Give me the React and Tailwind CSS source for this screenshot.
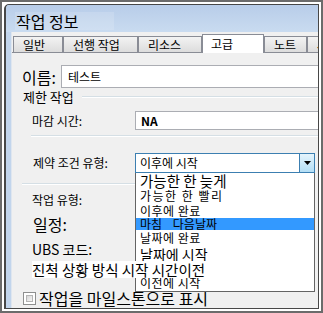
import React from "react";

const tabs = [
  { label: "일반", w: "w-[50px]" },
  { label: "선행 작업", w: "w-[75px]" },
  { label: "리소스", w: "w-[64px]" },
  { label: "고급", w: "w-[62px]", active: true },
  { label: "노트", w: "w-[43px]" },
  { label: "사용자 지정", w: "w-[30px]" },
];

const options = [
  { label: "가능한 한 늦게", h: "h-[15px]", size: "text-[14.5px]" },
  { label: "가능한 한 빨리", h: "h-[14px]", size: "text-[12px] tracking-[1.5px]" },
  { label: "이후에 완료", h: "h-[15px]", size: "text-[12px] tracking-[0.5px]" },
  { label: "마침    다음날짜", h: "h-[12px]", size: "text-[12px]", selected: true },
  { label: "날짜에 완료", h: "h-[16px]", size: "text-[12px] tracking-[0.5px]" },
  { label: "날짜에 시작", h: "h-[16px]", size: "text-[14px]" },
  { label: "", h: "h-[14px]", size: "text-[12px]" },
  { label: "이전에 시작", h: "h-[13px]", size: "text-[12px] tracking-[0.5px]" },
];

const Tab = ({ label, w, active }) => (
  <div
    className={
      active
        ? `${w} h-[19px] -mb-px bg-white border border-b-0 border-[#898c95] pl-[8px] text-[12px] leading-[17px] z-10 whitespace-nowrap overflow-hidden`
        : `${w} h-[16px] bg-gradient-to-b from-[#f3f3f3] to-[#dcdcdc] border border-b-0 border-[#898c95] pl-[9px] text-[12px] leading-[15px] whitespace-nowrap overflow-hidden`
    }
  >
    {label}
  </div>
);

export default function App() {
  return (
    <div className="w-[323px] h-[313px] bg-white border-2 border-[#6b6b6b] p-[2px] overflow-hidden text-black font-['Noto_Sans_CJK_KR','Noto_Sans',sans-serif]">
      <div className="h-full flex flex-col border border-l-2 border-[#474747] rounded-tl-[5px] bg-[#c2d5ec] overflow-hidden">
        {/* title bar */}
        <div className="h-[27px] shrink-0 flex items-center pt-[5px] pl-[9px] bg-gradient-to-b from-[#b8cde9] to-[#c9dbf0]">
          <span className="text-[16px] leading-[18px] px-[1px] pr-[36px] bg-white/15">작업 정보</span>
        </div>

        <div className="flex-1 flex pl-[5px]">
          <div className="flex-1 flex flex-col bg-[#f0f0f0] border-l border-[#dfe6ef]">
            {/* tabs */}
            <div className="h-[19px] shrink-0 flex items-end pl-[1px] mt-px">
              {tabs.map((t) => (
                <Tab key={t.label} {...t} />
              ))}
            </div>

            {/* pane */}
            <div className="relative flex-1 flex flex-col border-t border-[#898c95] pl-[10px]">
              {/* name */}
              <div className="mt-[12px] h-[23px] flex items-center">
                <span className="w-[39px] text-[16px] leading-[18px]">이름:</span>
                <div className="flex-1 h-[23px] bg-white border border-r-0 border-[#abadb3] pl-[6px] text-[12px] leading-[21px]">
                  테스트
                </div>
              </div>

              {/* group */}
              <div className="mt-px h-[16px] flex items-center">
                <span className="pl-px pr-[8px] text-[13px] leading-[16px]">제한 작업</span>
                <div className="flex-1 border-t border-[#d5dfe5] border-b border-b-white" />
              </div>

              {/* deadline */}
              <div className="mt-[6px] h-[19px] flex items-center pl-[10px]">
                <span className="w-[103px] text-[12px] leading-[14px]">마감 시간:</span>
                <div className="flex-1 h-[19px] bg-white border border-r-0 border-[#abadb3] pl-[5px] text-[12px] font-semibold leading-[17px]">
                  NA
                </div>
              </div>

              <div className="mt-[5px] ml-[9px] border-t border-[#d5dfe5] border-b border-b-white" />

              {/* constraint */}
              <div className="mt-[16px] h-[20px] flex items-center pl-[11px]">
                <span className="w-[102px] text-[12px] leading-[14px]">제약 조건 유형:</span>
                <div className="w-[180px] h-[20px] flex bg-white border border-[#3c7fb1]">
                  <span className="flex-1 pl-[4px] text-[12px] leading-[18px]">이후에 시작</span>
                  <div className="w-[15px] h-full flex items-center justify-center border-l border-[#3c7fb1] bg-gradient-to-b from-[#e5f4fc] to-[#b3def5]">
                    <svg width="7" height="4" viewBox="0 0 7 4">
                      <path d="M0 0H7L3.5 4Z" fill="#000" />
                    </svg>
                  </div>
                </div>
              </div>

              <div className="mt-[10px] w-[113px] border-t border-[#d5dfe5] border-b border-b-white" />

              <div className="mt-[8px] h-[14px] flex items-center pl-[10px] text-[12px] leading-[14px]">작업 유형:</div>
              <div className="mt-[8px] h-[18px] flex items-center pl-[11px] text-[16px] leading-[18px]">일정:</div>
              <div className="mt-[8px] h-[16px] flex items-center pl-[10px] text-[14px] leading-[16px]">UBS 코드:</div>
              <div className="relative z-20 mt-[3px] h-[18px] flex items-center pl-[10px]">
                <span className="bg-white text-[14.5px] leading-[17px] pr-[2px]">진척 상황 방식 시작 시간이전</span>
              </div>

              {/* milestone checkbox */}
              <div className="mt-[12px] h-[16px] flex items-center gap-[3px] pl-px">
                <div className="w-[13px] h-[13px] border border-[#8e8f8f] bg-white p-[2px]">
                  <div className="w-full h-full bg-gradient-to-br from-[#d6d6d6] to-[#f6f6f6] border border-[#b5b5b5]" />
                </div>
                <span className="text-[16px] leading-[18px]">작업을 마일스톤으로 표시</span>
              </div>

              {/* open dropdown list */}
              <div className="absolute z-10 left-[123px] top-[120px] w-[180px] h-[119px] bg-white border border-[#646464] border-t-0 pt-px">
                {options.map((o, i) => (
                  <div
                    key={i}
                    className={`${o.h} ${o.size} flex items-center pl-[4px] whitespace-pre leading-none ${
                      o.selected ? "bg-[#3399ff]" : ""
                    }`}
                  >
                    {o.label}
                  </div>
                ))}
              </div>
            </div>
          </div>
        </div>
      </div>
    </div>
  );
}
